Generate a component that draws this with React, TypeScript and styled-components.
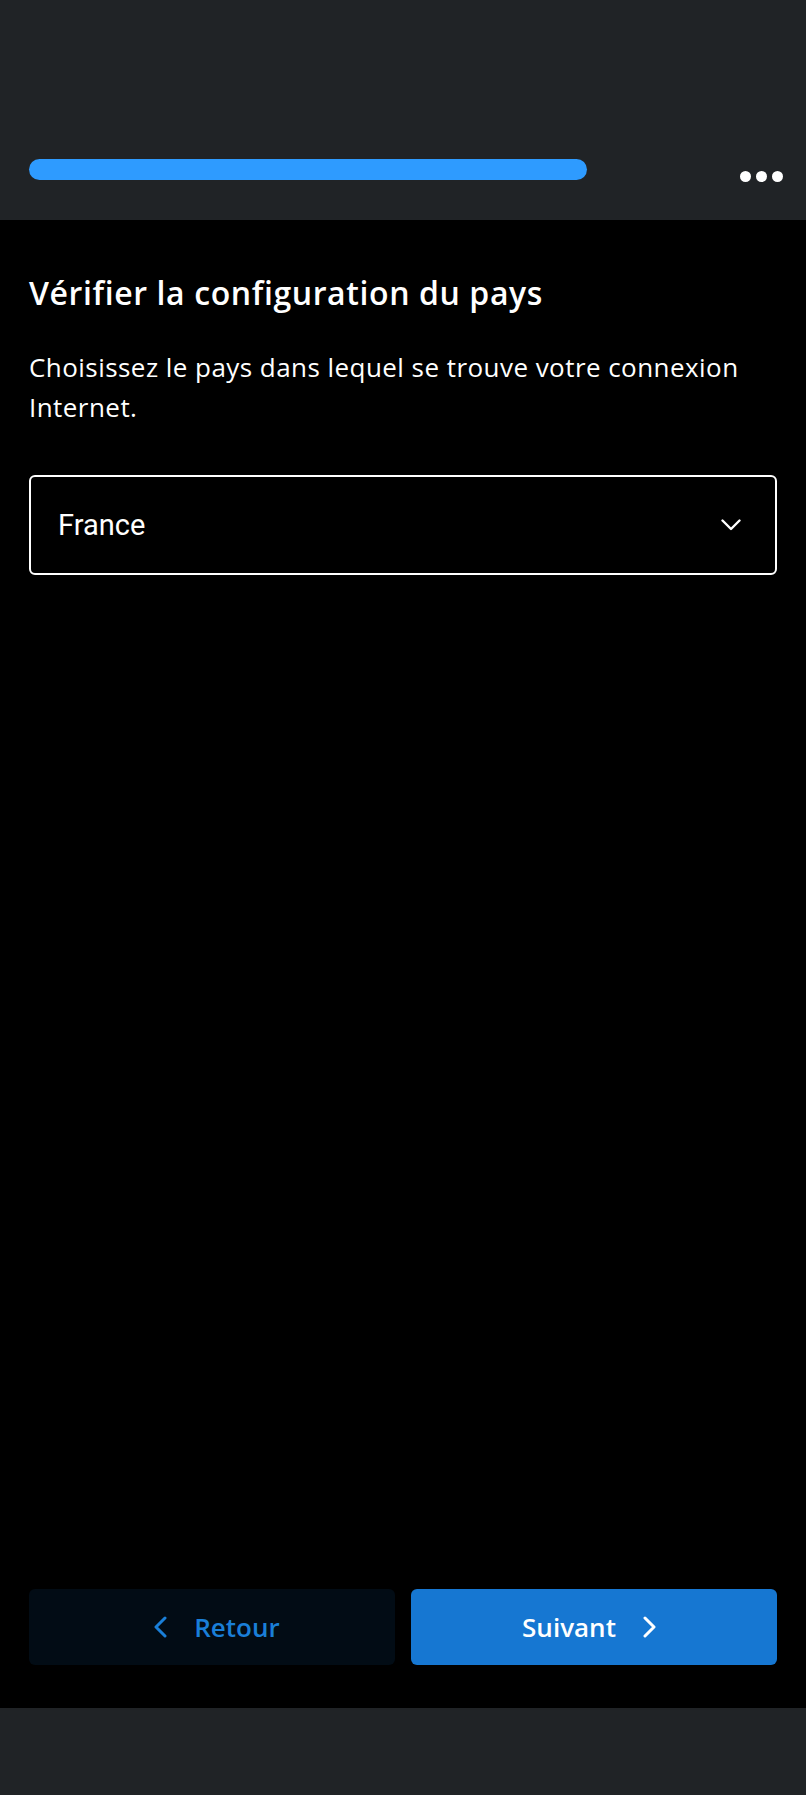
import React from 'react';
import styled, { createGlobalStyle } from 'styled-components';

const GlobalStyle = createGlobalStyle`
  html, body {
    margin: 0;
    padding: 0;
    background: #000;
  }
  * {
    box-sizing: border-box;
  }
`;

const Page = styled.div`
  display: flex;
  flex-direction: column;
  min-height: 100vh;
  background: #000;
  font-family: "Open Sans", "Noto Sans", sans-serif;
  color: #fff;
`;

const Header = styled.header`
  height: 220px;
  background: #202326;
  display: flex;
  justify-content: space-between;
  align-items: flex-start;
  padding: 159px 23px 0 29px;
`;

const Progress = styled.div<{ $width: number }>`
  flex: 0 0 ${(p) => p.$width}px;
  height: 21px;
  border-radius: 11px;
  background: #2e9bff;
`;

const MoreButton = styled.button`
  display: flex;
  gap: 5px;
  margin-top: 12px;
  padding: 0;
  border: none;
  background: none;
  cursor: pointer;
`;

const Dot = styled.span`
  width: 11px;
  height: 11px;
  border-radius: 50%;
  background: #fff;
`;

const Main = styled.main`
  flex: 1;
  display: flex;
  flex-direction: column;
  padding: 0 29px;
`;

const Title = styled.h1`
  margin: 53px 0 0;
  font-size: 32px;
  line-height: 40px;
  font-weight: 600;
  letter-spacing: 0.6px;
`;

const Description = styled.p`
  margin: 34px 0 0;
  font-size: 26px;
  line-height: 40px;
  font-weight: 400;
  letter-spacing: 0.45px;
`;

const Select = styled.button`
  margin-top: 48px;
  height: 100px;
  width: 100%;
  display: flex;
  align-items: center;
  justify-content: space-between;
  padding: 0 34px 0 27px;
  border: 2px solid #fff;
  border-radius: 6px;
  background: #000;
  color: #fff;
  font-family: Roboto, "Noto Sans", sans-serif;
  font-size: 29px;
  cursor: pointer;
`;

const Actions = styled.div`
  display: grid;
  grid-template-columns: 1fr 1fr;
  gap: 16px;
  padding: 0 29px 43px;
`;

const ActionButton = styled.button<{ $primary?: boolean }>`
  height: 76px;
  display: flex;
  align-items: center;
  justify-content: center;
  gap: 27px;
  border: none;
  border-radius: 6px;
  background: ${(p) => (p.$primary ? '#1677d2' : '#020c15')};
  color: ${(p) => (p.$primary ? '#fff' : '#1a7fd8')};
  font-family: "Open Sans", "Noto Sans", sans-serif;
  font-size: 26px;
  font-weight: 600;
  cursor: pointer;
`;

const BottomBar = styled.footer`
  height: 87px;
  background: #202326;
`;

// icon boxes are wider than the chevron, with the blank side facing outwards
const Chevron = ({ dir }: { dir: 'left' | 'right' | 'down' }) => {
  if (dir === 'down') {
    return (
      <svg width="20" height="12" viewBox="0 0 20 12" fill="none">
        <polyline points="1.5,1.5 10,10 18.5,1.5" stroke="currentColor" strokeWidth="2.4" strokeLinecap="round" strokeLinejoin="round" />
      </svg>
    );
  }
  const pts = dir === 'left' ? '21,2 12,11 21,20' : '2,2 11,11 2,20';
  return (
    <svg width="23" height="22" viewBox="0 0 23 22" fill="none">
      <polyline points={pts} stroke="currentColor" strokeWidth="3" strokeLinecap="round" strokeLinejoin="round" />
    </svg>
  );
};

export default function App() {
  return (
    <>
      <GlobalStyle />
      <Page>
        <Header>
          <Progress $width={558} />
          <MoreButton aria-label="Plus d'options">
            <Dot />
            <Dot />
            <Dot />
          </MoreButton>
        </Header>
        <Main>
          <Title>Vérifier la configuration du pays</Title>
          <Description>
            Choisissez le pays dans lequel se trouve votre connexion Internet.
          </Description>
          <Select>
            <span>France</span>
            <Chevron dir="down" />
          </Select>
        </Main>
        <Actions>
          <ActionButton>
            <Chevron dir="left" />
            Retour
          </ActionButton>
          <ActionButton $primary>
            Suivant
            <Chevron dir="right" />
          </ActionButton>
        </Actions>
        <BottomBar />
      </Page>
    </>
  );
}
